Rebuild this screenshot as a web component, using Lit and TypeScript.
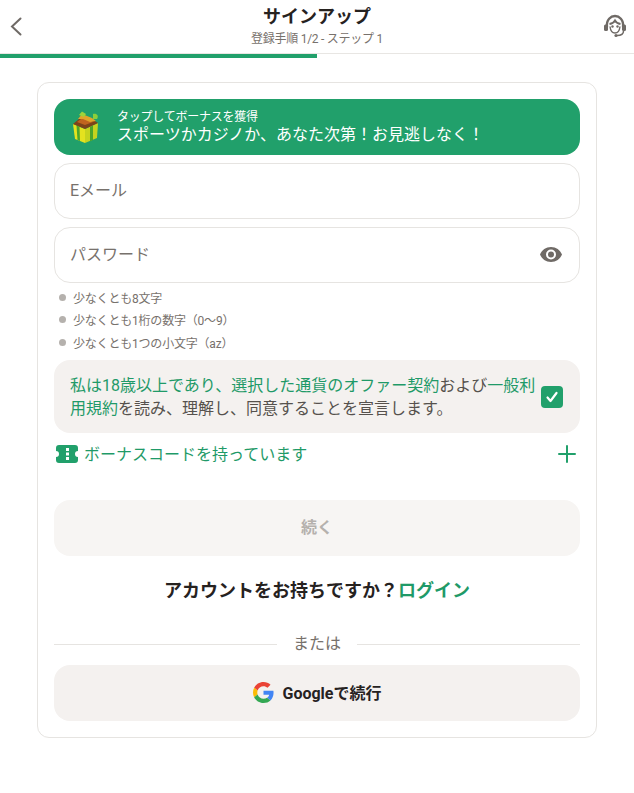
import { LitElement, html, css } from "lit";
import { customElement } from "lit/decorators.js";

@customElement("app-root")
export class AppRoot extends LitElement {
  static styles = css`
    :host { display: block; width: 634px; height: 793px; background: #fff; color: #26221f; font-family: Roboto, "Noto Sans CJK JP", sans-serif; overflow: hidden; }
    * { box-sizing: border-box; }
    .header { height: 54px; display: flex; align-items: center; justify-content: space-between; padding: 0 7px 0 8px; border-bottom: 1px solid #e8e6e3; }
    .back { width: 16px; height: 22px; margin-top: -1px; }
    .titles { position: absolute; left: 0; right: 0; top: 0; height: 53px; display: flex; flex-direction: column; align-items: center; pointer-events: none; }
    .title { font-size: 18px; font-weight: 700; line-height: 24px; margin-top: 5px; }
    .sub { font-size: 12px; line-height: 16px; color: #77716c; margin-top: 2px; letter-spacing: -0.25px; }
    .support { width: 24px; height: 24px; margin-top: -1px; }
    .progress { height: 4px; width: 317px; background: #21a06b; }
    .card { margin: 24px 37px 0; width: 560px; height: 656px; border: 1px solid #e6e4e1; border-radius: 12px; padding: 16px; display: flex; flex-direction: column; }
    .banner { height: 56px; border-radius: 16px; background: #21a06b; color: #fff; display: flex; align-items: center; padding-left: 16px; gap: 15px; flex: none; }
    .gift { width: 32px; height: 34px; flex: none; }
    .banner-small { font-size: 12px; line-height: 15px; letter-spacing: -0.25px; }
    .banner-big { font-size: 16px; line-height: 20px; }
    .field { height: 56px; flex: none; border: 1px solid #e6e4e1; border-radius: 16px; margin-top: 8px; display: flex; align-items: center; justify-content: space-between; padding: 0 15px 5px; font-size: 16px; color: #77716c; }
    .eye { width: 24px; height: 24px; margin-right: 1px; margin-top: 3px; }
    .hints { list-style: none; margin: 3px 0 0; padding: 0 0 0 5px; }
    .hints li { display: flex; align-items: center; gap: 7px; height: 22.5px; font-size: 12px; color: #77716c; letter-spacing: -0.2px; }
    .dot { width: 7px; height: 7px; border-radius: 50%; background: #b5b1ad; flex: none; }
    .consent { height: 73px; flex: none; margin-top: 6px; background: #f4f1ef; border-radius: 16px; padding: 1px 15px 0 16px; display: flex; align-items: center; justify-content: space-between; font-size: 16px; line-height: 23px; color: #56514d; }
    .consent p { margin: 0; width: 472px; }
    .link { color: #1f9a68; }
    .check { width: 22px; height: 22px; border-radius: 4px; background: #21a06b; flex: none; display: flex; align-items: center; justify-content: center; margin-right: 2px; }
    .check svg { width: 14px; height: 14px; }
    .bonus { height: 42px; flex: none; display: flex; align-items: center; color: #1f9a68; font-size: 16px; gap: 6px; padding-left: 2px; }
    .bonus span { flex: 1; padding-bottom: 2px; }
    .ticket { width: 22px; height: 18px; }
    .plus { width: 20px; height: 20px; margin-right: 3px; margin-top: 1px; }
    .continue { height: 56px; flex: none; margin-top: 25px; background: #f7f5f3; border-radius: 16px; display: flex; align-items: center; justify-content: center; padding-bottom: 3px; font-size: 16px; font-weight: 700; color: #b5b1ad; }
    .login { margin-top: 22px; height: 26px; flex: none; text-align: center; font-size: 18px; font-weight: 700; line-height: 26px; }
    .divider { margin-top: 29px; height: 24px; flex: none; display: flex; align-items: center; gap: 16px; font-size: 16px; color: #77716c; }
    .divider span { padding-bottom: 5px; }
    .divider i { flex: 1; height: 1px; background: #e6e4e1; }
    .google { height: 56px; flex: none; margin-top: 8px; background: #f4f1ef; border-radius: 16px; display: flex; align-items: center; justify-content: center; gap: 9px; font-size: 16px; font-weight: 700; }
    .google span { padding-bottom: 2px; }
    .g { width: 21px; height: 21px; }
  `;

  render() {
    return html`
      <div class="header">
        <svg class="back" viewBox="0 0 16 22" fill="none" stroke="#6f6a66" stroke-width="2" stroke-linecap="round"><path d="M12.5 3.500 L4 11.500 L12.500 19.500"/></svg>
        <div class="titles">
          <div class="title">サインアップ</div>
          <div class="sub">登録手順 1/2 - ステップ 1</div>
        </div>
        <svg class="support" viewBox="0 0 24 24" fill="none" stroke="#6f6a66" stroke-width="2.400">
          <path d="M4 13 C3 5.500 8 2 12 2 C16 2 21 5.500 20 13"/>
          <path d="M6.500 10 C9 9.500 11 8.500 12 6.500 C13 8.500 15 9.500 17.500 10" stroke-width="1.800"/>
          <path d="M7 12.500 C7.500 17 10 19 12 19 C14 19 16.500 17 17 12.500" stroke-width="1.400"/>
          <rect x="1" y="10.500" width="4" height="6.500" rx="1.500" fill="#6f6a66" stroke="none"/>
          <rect x="19" y="10.500" width="4" height="6.500" rx="1.500" fill="#6f6a66" stroke="none"/>
          <circle cx="9.500" cy="12.500" r="1.200" fill="#6f6a66" stroke="none"/>
          <circle cx="14.500" cy="12.500" r="1.200" fill="#6f6a66" stroke="none"/>
          <path d="M20.500 17 C20.500 20.500 17 21.500 14 21.500" stroke-width="1.500"/>
          <circle cx="13" cy="21.500" r="1.600" fill="#6f6a66" stroke="none"/>
        </svg>
      </div>
      <div class="progress"></div>
      <div class="card">
        <div class="banner">
          <svg class="gift" viewBox="0 0 32 34">
            <path d="M3 14 L15 19 L15 33 L5 29 Z" fill="#e4e21f"/>
            <path d="M15 19 L28 13 L27 28 L15 33 Z" fill="#c6d31e"/>
            <path d="M6.500 15.500 L9.500 16.800 L10 31 L7.500 30 Z M20 17 L23 15.500 L23 30 L20 31.500 Z" fill="#4ba52c"/>
            <path d="M3 14 L15 19 L28 13 L22 9 L9 9 Z" fill="#7d431a"/>
            <path d="M7 12 L15 15 L23 12 L17 9 L11 9 Z" fill="#c0641f"/>
            <path d="M8 9 L12 4 L22 8 L26 11 L20 12 L13 9 Z" fill="#e0a52a"/>
            <path d="M12 1.500 L16 4 L14 7 L9 5 Z" fill="#9fd33a"/>
            <path d="M23 4 C27 3 29 6 27 9 L23 9 Z" fill="#8ccf3a"/>
          </svg>
          <div>
            <div class="banner-small">タップしてボーナスを獲得</div>
            <div class="banner-big">スポーツかカジノか、あなた次第！お見逃しなく！</div>
          </div>
        </div>
        <div class="field">Eメール</div>
        <div class="field">パスワード
          <svg class="eye" viewBox="0 0 24 24"><path fill="#6f6a66" d="M12 5C7 5 2.700 8.100 1 12.500c1.700 4.400 6 7.500 11 7.500s9.300-3.100 11-7.500C21.300 8.100 17 5 12 5zm0 12.500a5 5 0 1 1 0-10 5 5 0 0 1 0 10zm0-8a3 3 0 1 0 0 6 3 3 0 0 0 0-6z"/></svg>
        </div>
        <ul class="hints">
          <li><span class="dot"></span>少なくとも8文字</li>
          <li><span class="dot"></span>少なくとも1桁の数字（0〜9）</li>
          <li><span class="dot"></span>少なくとも1つの小文字（az）</li>
        </ul>
        <div class="consent">
          <p><span class="link">私は18歳以上であり、選択した通貨のオファー契約</span>および<span class="link">一般利用規約</span>を読み、理解し、同意することを宣言します。</p>
          <div class="check"><svg viewBox="0 0 14 14" fill="none" stroke="#fff" stroke-width="2.200" stroke-linecap="round" stroke-linejoin="round"><path d="M2.500 7.500 L5.500 11 L11.500 3"/></svg></div>
        </div>
        <div class="bonus">
          <svg class="ticket" viewBox="0 0 22 18"><path fill="#21a06b" fill-rule="evenodd" d="M3 0H19a3 3 0 0 1 3 3V6a3 3 0 0 0 0 6V15a3 3 0 0 1-3 3H3a3 3 0 0 1-3-3V12a3 3 0 0 0 0-6V3a3 3 0 0 1 3-3ZM10 3h3v3h-3ZM10 7.500h3v3h-3ZM10 12h3v3h-3Z"/></svg>
          <span>ボーナスコードを持っています</span>
          <svg class="plus" viewBox="0 0 20 20" stroke="#21a06b" stroke-width="2" stroke-linecap="round"><path d="M10 2V18M2 10H18"/></svg>
        </div>
        <div class="continue">続く</div>
        <div class="login">アカウントをお持ちですか？<span class="link">ログイン</span></div>
        <div class="divider"><i></i><span>または</span><i></i></div>
        <div class="google">
          <svg class="g" viewBox="0 0 48 48">
            <path fill="#EA4335" d="M24 9.500c3.540 0 6.710 1.220 9.210 3.600l6.850-6.850C35.900 2.380 30.470 0 24 0 14.620 0 6.510 5.380 2.560 13.220l7.980 6.190C12.430 13.720 17.740 9.500 24 9.500z"/>
            <path fill="#4285F4" d="M46.980 24.550c0-1.570-.15-3.090-.38-4.550H24v9.020h12.940c-.58 2.960-2.260 5.480-4.780 7.180l7.730 6c4.510-4.180 7.090-10.360 7.090-17.650z"/>
            <path fill="#FBBC05" d="M10.530 28.590c-.48-1.450-.76-2.990-.76-4.590s.27-3.140.76-4.590l-7.980-6.190C.92 16.460 0 20.120 0 24c0 3.880.92 7.540 2.560 10.780l7.970-6.190z"/>
            <path fill="#34A853" d="M24 48c6.480 0 11.930-2.130 15.890-5.810l-7.730-6c-2.150 1.450-4.920 2.300-8.160 2.300-6.260 0-11.570-4.220-13.470-9.910l-7.980 6.190C6.510 42.620 14.620 48 24 48z"/>
          </svg>
          <span>Googleで続行</span>
        </div>
      </div>
    `;
  }
}
